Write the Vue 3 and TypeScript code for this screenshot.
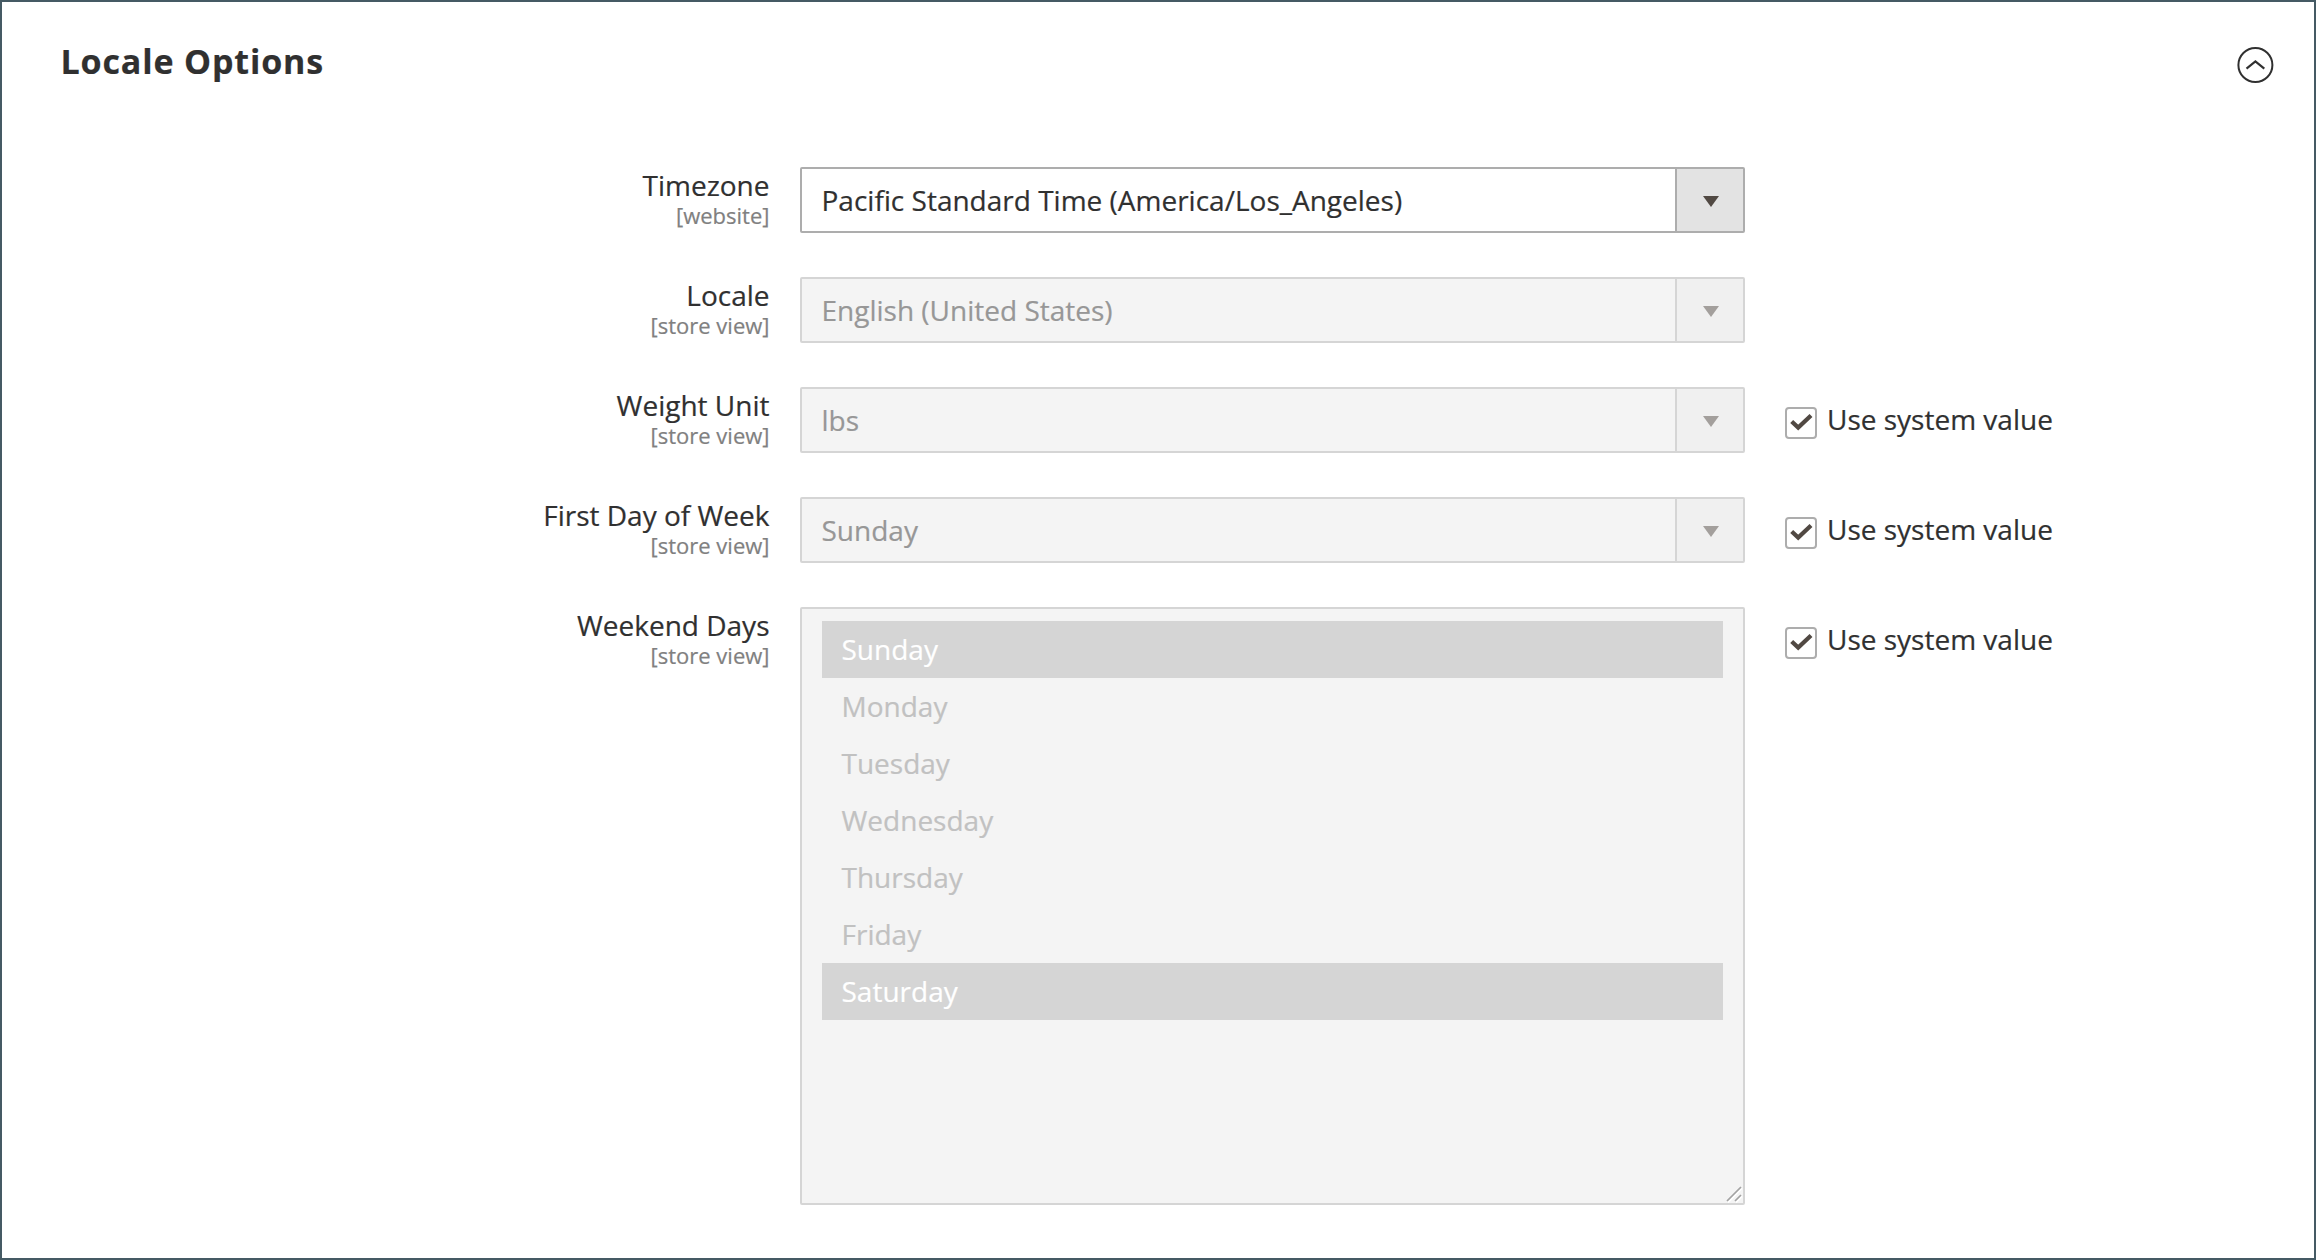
<script setup lang="ts">
interface Field {
  label: string
  scope: string
  value?: string
  disabled: boolean
  system: boolean
}

const fields: Field[] = [
  { label: 'Timezone', scope: '[website]', value: 'Pacific Standard Time (America/Los_Angeles)', disabled: false, system: false },
  { label: 'Locale', scope: '[store view]', value: 'English (United States)', disabled: true, system: false },
  { label: 'Weight Unit', scope: '[store view]', value: 'lbs', disabled: true, system: true },
  { label: 'First Day of Week', scope: '[store view]', value: 'Sunday', disabled: true, system: true },
  { label: 'Weekend Days', scope: '[store view]', disabled: true, system: true },
]

const days = ['Sunday', 'Monday', 'Tuesday', 'Wednesday', 'Thursday', 'Friday', 'Saturday']
const weekend = ['Sunday', 'Saturday']
</script>

<template>
  <section class="panel">
    <header class="head">
      <h2 class="title">Locale Options</h2>
      <svg class="collapse" width="38" height="38" viewBox="0 0 38 38" fill="none" stroke="#303030" stroke-width="2">
        <circle cx="19.4" cy="19" r="17" />
        <path d="M10.5 22.6 19.4 15.5l8.9 7.1" stroke-width="2.2" />
      </svg>
    </header>

    <div class="fields">
      <div v-for="field in fields" :key="field.label" class="field">
        <div class="caption">
          <span class="label">{{ field.label }}</span>
          <span class="scope">{{ field.scope }}</span>
        </div>

        <div v-if="field.value" class="select" :class="{ disabled: field.disabled }">
          <span class="value">{{ field.value }}</span>
          <span class="toggle">
            <svg width="16" height="11" viewBox="0 0 16 11"><path d="M0 0h16L8 11z" fill="#514943" /></svg>
          </span>
        </div>
        <div v-else class="multi">
          <div v-for="day in days" :key="day" class="option" :class="{ selected: weekend.includes(day) }">{{ day }}</div>
          <svg class="grip" width="18" height="18" viewBox="0 0 18 18" fill="none">
            <path d="M3 17.5 17 3.5M11 17.5l6-6" stroke="#fff" stroke-width="1.6" />
            <path d="M2 16 16 2M10 16l6-6" stroke="#a3a3a3" stroke-width="1.7" />
          </svg>
        </div>

        <div v-if="field.system" class="system">
          <span class="box">
            <svg width="28" height="28" viewBox="2 2 28 28" fill="none">
              <path d="M6.7 14.4 13.2 20.6 26 8.5" stroke="#514943" stroke-width="4.2" />
            </svg>
          </span>
          <span>Use system value</span>
        </div>
      </div>
    </div>
  </section>
</template>

<style>
body {
  background: #fff;
}
</style>

<style scoped>
.panel {
  box-sizing: border-box;
  width: 2316px;
  height: 1260px;
  border: 2px solid #455a64;
  background: #fff;
  color: #303030;
  font-family: 'Open Sans', 'Noto Sans', sans-serif;
  font-size: 28px;
  -webkit-text-stroke: 0.2px currentColor;
}
.head {
  display: flex;
  justify-content: space-between;
  height: 165px;
  padding: 0 40px 0 58.5px;
  box-sizing: border-box;
}
.title {
  margin: 35px 0 0;
  font-size: 34px;
  line-height: 48px;
  font-weight: 700;
  letter-spacing: 0.85px;
}
.collapse {
  margin-top: 44px;
}
.fields {
  display: flex;
  flex-direction: column;
  gap: 44px;
}
.field {
  display: flex;
  align-items: flex-start;
}
.caption {
  display: flex;
  flex-direction: column;
  box-sizing: border-box;
  width: 798px;
  padding: 2px 30.5px 0 0;
  text-align: right;
}
.label {
  line-height: 32px;
}
.scope {
  color: #808080;
  font-size: 22px;
  line-height: 28px;
}
.select {
  display: flex;
  box-sizing: border-box;
  width: 945px;
  height: 66px;
  border: 2px solid #adadad;
  border-radius: 2px;
  line-height: 62px;
}
.value {
  flex: 1;
  padding-left: 19.5px;
}
.toggle {
  display: flex;
  align-items: center;
  justify-content: center;
  box-sizing: border-box;
  width: 68px;
  padding-top: 3px;
  padding-left: 1px;
  border-left: 2px solid #adadad;
  background: #e3e3e3;
}
.select.disabled {
  border-color: #d5d5d5;
  background: #f4f4f4;
}
.disabled .value {
  color: #979797;
}
.disabled .toggle {
  border-color: #d5d5d5;
  background: #f0f0f0;
}
.disabled .toggle svg {
  opacity: 0.48;
}
.multi {
  position: relative;
  box-sizing: border-box;
  width: 945px;
  height: 598px;
  padding: 12px 20px;
  border: 2px solid #d5d5d5;
  border-radius: 2px;
  background: #f4f4f4;
}
.option {
  height: 57px;
  padding-left: 19.5px;
  color: #c1c1c1;
  line-height: 57px;
}
.option.selected {
  background: #d5d5d5;
  color: #fff;
}
.grip {
  position: absolute;
  right: 0;
  bottom: 0;
}
.system {
  display: flex;
  margin-left: 40px;
  line-height: 64px;
}
.box {
  display: flex;
  box-sizing: border-box;
  width: 32px;
  height: 32px;
  margin: 20px 10px 0 0;
  border: 2px solid #adadad;
  border-radius: 4px;
}
</style>
